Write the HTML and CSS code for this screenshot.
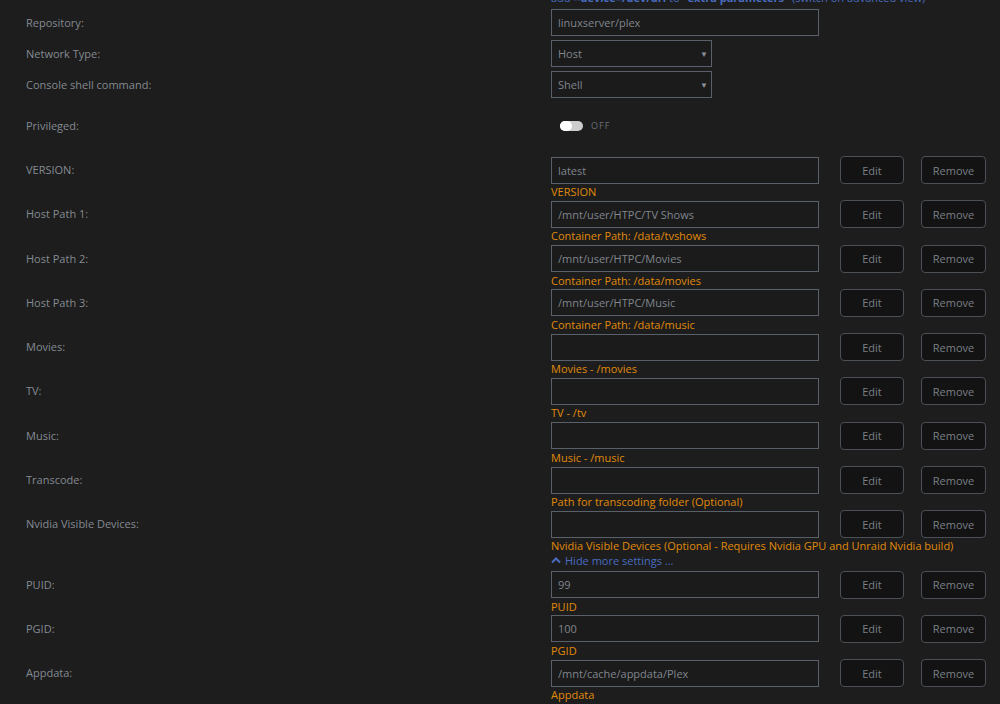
FILE: index.html
```html
<!DOCTYPE html>
<html lang="en">

<head>
    <meta charset="UTF-8">
    <meta name="viewport" content="width=device-width, initial-scale=1.0">
    <title>Update Container</title>
    <link rel="stylesheet" href="styles.css">
</head>

<body>
    <div class="form">
        <div class="row hint-row">
            <div class="label"></div>
            <div class="hint">add <b>--device=/dev/dri</b> to <b>"extra parameters"</b> (switch on advanced view)</div>
        </div>

        <div class="row top-row">
            <label class="label">Repository:</label>
            <input class="text-input" type="text" value="linuxserver/plex">
        </div>
        <div class="row top-row">
            <label class="label">Network Type:</label>
            <div class="select-box">
                <span>Host</span>
                <span class="arrow">&#9660;</span>
            </div>
        </div>
        <div class="row top-row">
            <label class="label">Console shell command:</label>
            <div class="select-box">
                <span>Shell</span>
                <span class="arrow">&#9660;</span>
            </div>
        </div>

        <div class="row privileged-row">
            <label class="label">Privileged:</label>
            <div class="switch">
                <span class="track"><span class="knob"></span></span>
                <span class="switch-text">OFF</span>
            </div>
        </div>

        <div id="configList"></div>

        <div class="row more-row">
            <div class="label"></div>
            <a class="more-link" href="#">
                <svg width="10" height="8" viewBox="0 0 10 8"><path d="M1 6.5 L5 2.5 L9 6.5" fill="none" stroke="#4a6cc0" stroke-width="2"/></svg>
                Hide more settings ...
            </a>
        </div>

        <div id="advancedList"></div>
    </div>

    <script>
        const configs = [
            { name: 'VERSION:', value: 'latest', desc: 'VERSION' },
            { name: 'Host Path 1:', value: '/mnt/user/HTPC/TV Shows', desc: 'Container Path: /data/tvshows' },
            { name: 'Host Path 2:', value: '/mnt/user/HTPC/Movies', desc: 'Container Path: /data/movies' },
            { name: 'Host Path 3:', value: '/mnt/user/HTPC/Music', desc: 'Container Path: /data/music' },
            { name: 'Movies:', value: '', desc: 'Movies - /movies' },
            { name: 'TV:', value: '', desc: 'TV - /tv' },
            { name: 'Music:', value: '', desc: 'Music - /music' },
            { name: 'Transcode:', value: '', desc: 'Path for transcoding folder (Optional)' },
            { name: 'Nvidia Visible Devices:', value: '', desc: 'Nvidia Visible Devices (Optional - Requires Nvidia GPU and Unraid Nvidia build)' }
        ];

        const advanced = [
            { name: 'PUID:', value: '99', desc: 'PUID' },
            { name: 'PGID:', value: '100', desc: 'PGID' },
            { name: 'Appdata:', value: '/mnt/cache/appdata/Plex', desc: 'Appdata' }
        ];

        function fillList(id, items) {
            const list = document.getElementById(id);
            items.forEach(item => {
                const row = document.createElement('div');
                row.classList.add('row', 'config-row');

                const label = document.createElement('label');
                label.classList.add('label');
                label.textContent = item.name;

                const field = document.createElement('div');
                field.classList.add('field');

                const line = document.createElement('div');
                line.classList.add('field-line');

                const input = document.createElement('input');
                input.classList.add('text-input');
                input.type = 'text';
                input.value = item.value;

                const edit = document.createElement('button');
                edit.classList.add('btn', 'btn-edit');
                edit.textContent = 'Edit';

                const remove = document.createElement('button');
                remove.classList.add('btn', 'btn-remove');
                remove.textContent = 'Remove';

                line.appendChild(input);
                line.appendChild(edit);
                line.appendChild(remove);

                const desc = document.createElement('div');
                desc.classList.add('desc');
                desc.textContent = item.desc;

                field.appendChild(line);
                field.appendChild(desc);
                row.appendChild(label);
                row.appendChild(field);
                list.appendChild(row);
            });
        }

        fillList('configList', configs);
        fillList('advancedList', advanced);
    </script>
</body>

</html>
```

FILE: styles.css
```css
body {
    margin: 0;
    padding: 0;
    background: #1c1d1c;
    font-family: 'Open Sans', sans-serif;
    font-size: 11px;
    color: #858a93;
    overflow: hidden;
}

.form {
    padding-left: 26px;
}

.row {
    display: flex;
    align-items: flex-start;
}

.label {
    width: 525px;
    flex-shrink: 0;
    height: 27px;
    line-height: 27px;
    color: #858a93;
}

.hint-row {
    margin-top: -9px;
    height: 14px;
}

.hint-row .label {
    height: 14px;
}

.hint {
    line-height: 14px;
    color: #4a6cc0;
    white-space: nowrap;
}

.top-row {
    margin-top: 4px;
}

.text-input {
    width: 268px;
    height: 27px;
    box-sizing: border-box;
    margin: 0;
    padding: 0 6px;
    background: #1a1b1a;
    border: 1px solid #5a6069;
    border-radius: 0;
    font-family: 'Open Sans', sans-serif;
    font-size: 11px;
    color: #80858e;
    outline: none;
}

.select-box {
    width: 161px;
    height: 27px;
    box-sizing: border-box;
    padding: 0 3px 0 6px;
    border: 1px solid #5a6069;
    background: #1a1b1a;
    display: flex;
    align-items: center;
    justify-content: space-between;
    color: #80858e;
}

.arrow {
    font-size: 8px;
    color: #8b9099;
}

.privileged-row {
    margin-top: 14px;
    margin-bottom: 17px;
}

.switch {
    display: flex;
    align-items: center;
    height: 27px;
    padding-left: 9px;
}

.track {
    display: inline-block;
    width: 23px;
    height: 10px;
    border-radius: 5px;
    background: #cdcdcd;
    position: relative;
}

.knob {
    position: absolute;
    left: 0;
    top: 0;
    width: 12px;
    height: 10px;
    border-radius: 5px;
    background: #fff;
}

.switch-text {
    margin-left: 8px;
    font-size: 9px;
    letter-spacing: 1px;
    color: #6c7079;
}

.config-row {
    height: 44.3px;
}

.field-line {
    display: flex;
    align-items: center;
}

.btn {
    height: 28px;
    box-sizing: border-box;
    margin-left: 21px;
    padding: 0;
    background: #121312;
    border: 1px solid #4b5057;
    border-radius: 4px;
    font-family: 'Open Sans', sans-serif;
    font-size: 11px;
    color: #7a7f87;
    cursor: pointer;
}

.btn-edit {
    width: 64px;
}

.btn-remove {
    width: 65px;
    margin-left: 17px;
}

.desc {
    line-height: 16px;
    color: #e08a0b;
    white-space: nowrap;
}

.more-row {
    height: 15px;
    margin-top: -2px;
    margin-bottom: 3px;
}

.more-row .label {
    height: 15px;
}

.more-link {
    display: flex;
    align-items: center;
    gap: 4px;
    line-height: 15px;
    color: #4a6cc0;
    text-decoration: none;
    white-space: nowrap;
}
```
